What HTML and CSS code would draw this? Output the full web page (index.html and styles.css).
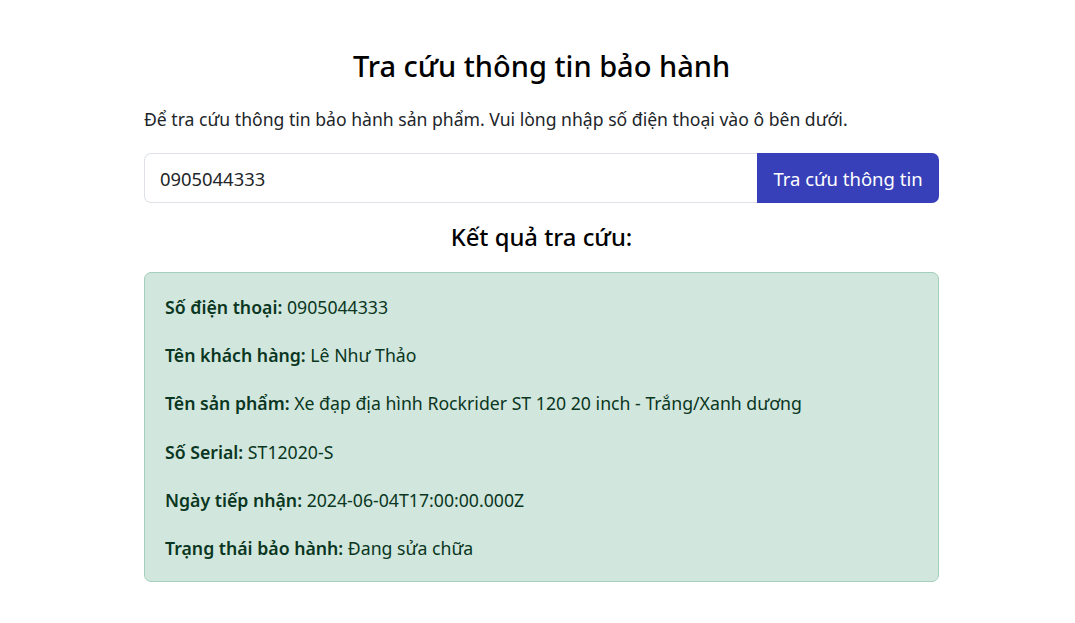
FILE: index.html
```html
<!DOCTYPE html>
<html lang="vi">
<head>
    <meta charset="UTF-8">
    <meta name="viewport" content="width=device-width, initial-scale=1.0">
    <title>Tra cứu bảo hành</title>
    <link rel="stylesheet" href="styles.css">
</head>
<body>
    <div class="warranty">
        <h1 class="title">Tra cứu thông tin bảo hành</h1>
        <p class="intro">Để tra cứu thông tin bảo hành sản phẩm. Vui lòng nhập số điện thoại vào ô bên dưới.</p>

        <form class="search">
            <input type="text" class="search-input" value="0905044333">
            <button type="button" class="search-btn">Tra cứu thông tin</button>
        </form>

        <h2 class="result-title">Kết quả tra cứu:</h2>
        <div class="result">
            <p><strong>Số điện thoại:</strong> 0905044333</p>
            <p><strong>Tên khách hàng:</strong> Lê Như Thảo</p>
            <p><strong>Tên sản phẩm:</strong> Xe đạp địa hình Rockrider ST 120 20 inch - Trắng/Xanh dương</p>
            <p><strong>Số Serial:</strong> ST12020-S</p>
            <p><strong>Ngày tiếp nhận:</strong> 2024-06-04T17:00:00.000Z</p>
            <p><strong>Trạng thái bảo hành:</strong> Đang sửa chữa</p>
        </div>
    </div>
</body>
</html>
```

FILE: styles.css
```css
body {
    font-family: 'Noto Sans', 'Open Sans', Arial, sans-serif;
    margin: 0 0 0 8px;
    padding: 0;
    background-color: #fff;
    color: #212529;
}
.warranty {
    max-width: 795px;
    margin: 0 auto;
    padding-top: 46px;
}
.title {
    text-align: center;
    font-size: 29px;
    font-weight: 500;
    line-height: 40px;
    margin: 0 0 20px;
    color: #000;
}
.intro {
    font-size: 17.6px;
    line-height: 27px;
    margin: 0 0 20px;
}
.search {
    display: flex;
    margin: 0;
}
.search-input {
    flex: 1;
    height: 50px;
    box-sizing: border-box;
    border: 1px solid #dee2e6;
    border-right: none;
    border-radius: 7px 0 0 7px;
    padding: 0 15px;
    font-family: inherit;
    font-size: 18.4px;
    color: #212529;
    outline: none;
}
.search-btn {
    height: 50px;
    width: 182px;
    border: none;
    border-radius: 0 7px 7px 0;
    background-color: #3740b9;
    color: #fff;
    font-family: inherit;
    font-size: 18.5px;
    cursor: pointer;
}
.result-title {
    text-align: center;
    font-size: 23.8px;
    font-weight: 500;
    line-height: 32px;
    margin: 18px 0 19px;
    color: #000;
}
.result {
    background-color: #d1e7dd;
    border: 1px solid #a3cfbb;
    border-radius: 7px;
    padding: 20px 20px 19px;
    color: #0a3622;
}
.result p {
    font-size: 17.7px;
    line-height: 28px;
    margin: 0 0 20.2px;
}
.result p:last-child {
    margin-bottom: 0;
}
.result strong {
    font-weight: 600;
}
```
